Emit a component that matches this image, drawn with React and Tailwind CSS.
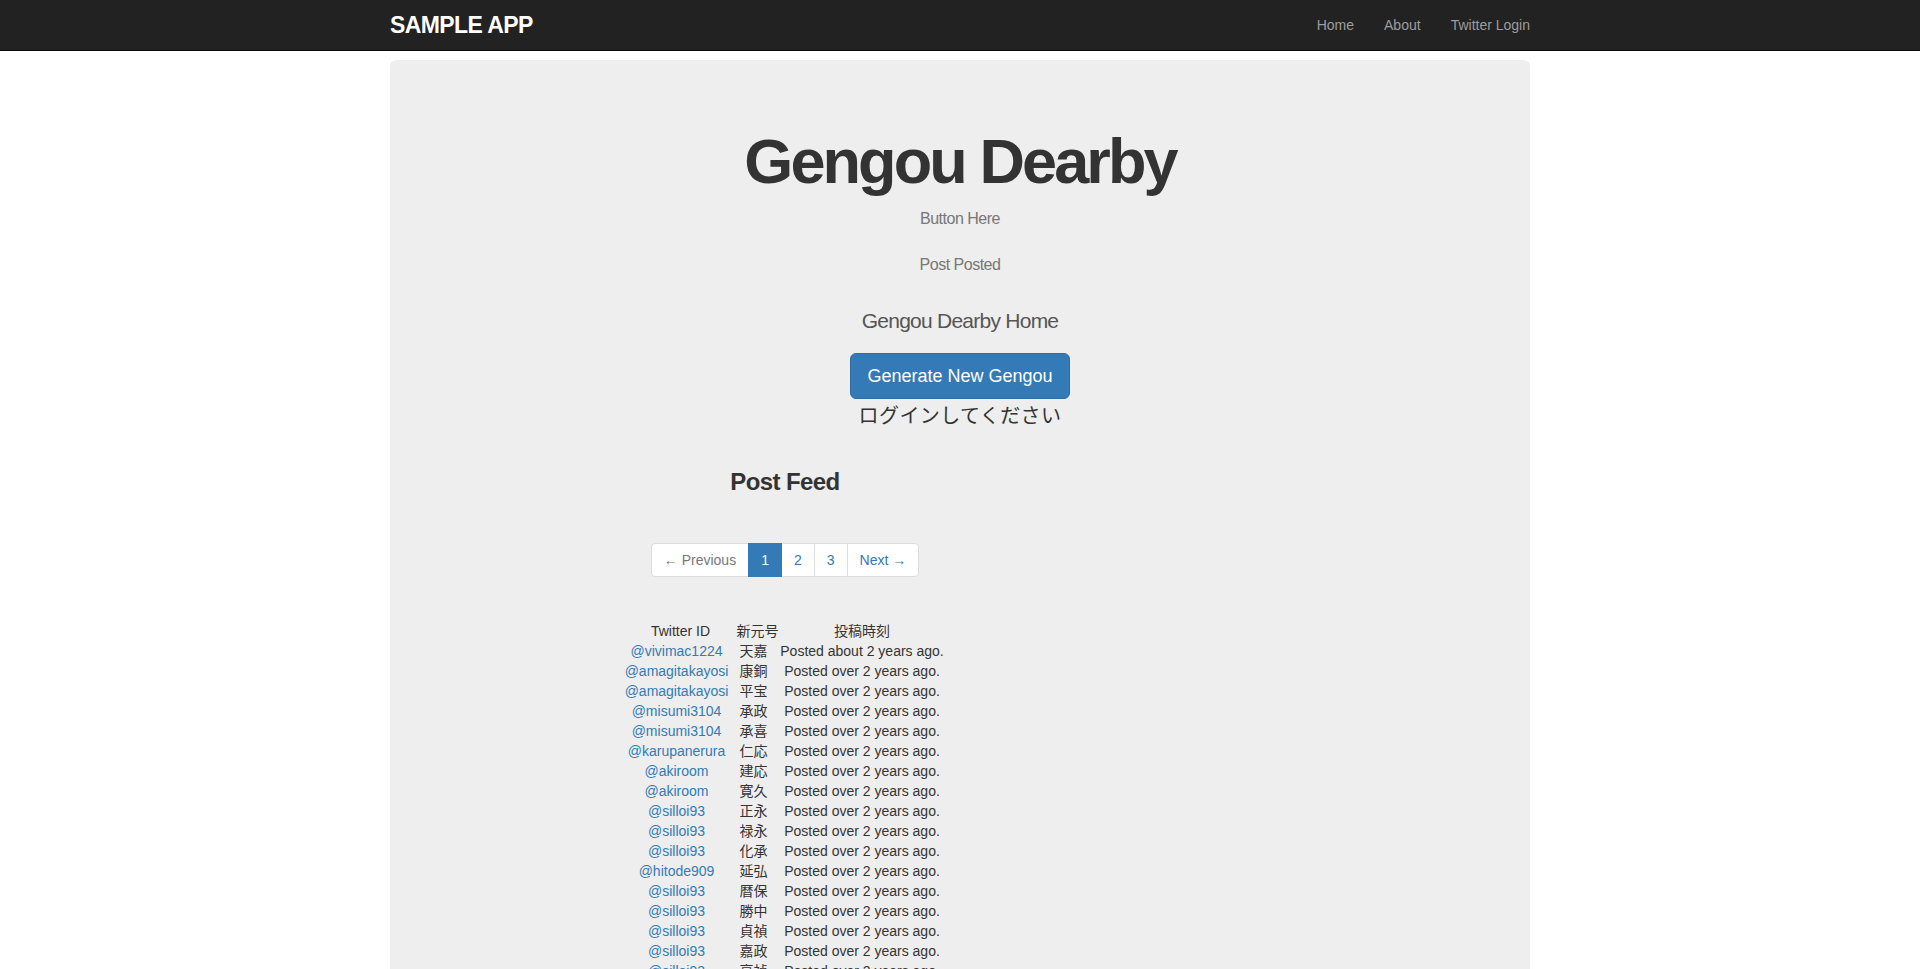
import React from "react";

const rows = [
  ["@vivimac1224", "天嘉", "Posted about 2 years ago."],
  ["@amagitakayosi", "康銅", "Posted over 2 years ago."],
  ["@amagitakayosi", "平宝", "Posted over 2 years ago."],
  ["@misumi3104", "承政", "Posted over 2 years ago."],
  ["@misumi3104", "承喜", "Posted over 2 years ago."],
  ["@karupanerura", "仁応", "Posted over 2 years ago."],
  ["@akiroom", "建応", "Posted over 2 years ago."],
  ["@akiroom", "寛久", "Posted over 2 years ago."],
  ["@silloi93", "正永", "Posted over 2 years ago."],
  ["@silloi93", "禄永", "Posted over 2 years ago."],
  ["@silloi93", "化承", "Posted over 2 years ago."],
  ["@hitode909", "延弘", "Posted over 2 years ago."],
  ["@silloi93", "暦保", "Posted over 2 years ago."],
  ["@silloi93", "勝中", "Posted over 2 years ago."],
  ["@silloi93", "貞禎", "Posted over 2 years ago."],
  ["@silloi93", "嘉政", "Posted over 2 years ago."],
  ["@silloi93", "享禎", "Posted over 2 years ago."],
  ["@silloi93", "文長", "Posted over 2 years ago."],
  ["@silloi93", "安徳", "Posted over 2 years ago."],
];

export default function App() {
  return (
    <div className="min-h-[969px] bg-white font-['Liberation_Sans','Noto_Sans_CJK_JP',sans-serif] text-[14px] text-[#333]">
      <nav className="h-[51px] bg-[#222] border-b border-[#080808]">
        <div className="w-[1170px] mx-auto px-[15px] h-[50px] flex items-center justify-between">
          <a className="text-white font-bold text-[23px] tracking-[-0.6px] leading-[50px]">SAMPLE APP</a>
          <ul className="flex -mr-[15px]">
            <li className="px-[15px] leading-[50px] text-[#9d9d9d]">Home</li>
            <li className="px-[15px] leading-[50px] text-[#9d9d9d]">About</li>
            <li className="px-[15px] leading-[50px] text-[#9d9d9d]">Twitter Login</li>
          </ul>
        </div>
      </nav>
      <div className="w-[1170px] mx-auto px-[15px] pt-[9px]">
        <div className="bg-[#eee] rounded-[6px] px-[60px] pt-[66px] pb-[60px]">
          <div className="flex flex-col items-center">
            <h1 className="text-[63px] leading-[70px] font-bold tracking-[-2.9px] text-[#333]">Gengou Dearby</h1>
            <div className="mt-[13px] leading-[20px] text-[16px] tracking-[-0.5px] text-[#777]">Button Here</div>
            <div className="mt-[26px] leading-[20px] text-[16px] tracking-[-0.5px] text-[#777]">Post Posted</div>
            <p className="mt-[31px] leading-[30px] text-[21px] font-light tracking-[-0.75px] text-[#555]">Gengou Dearby Home</p>
            <button className="mt-[17px] h-[46px] px-[16px] bg-[#337ab7] border border-[#2e6da4] rounded-[6px] text-white text-[18px] leading-[24px]">Generate New Gengou</button>
            <div className="mt-[2px] leading-[28px] text-[20px] tracking-[0.4px] font-['Noto_Sans_CJK_JP',sans-serif] text-[#333]">ログインしてください</div>
          </div>
          <div className="w-[670px] flex flex-col items-center">
            <h3 className="mt-[40px] text-[24px] leading-[26px] font-bold tracking-[-0.6px] text-[#333]">Post Feed</h3>
            <div className="mt-[48px] flex h-[34px] text-[14px] leading-[20px]">
              <span className="px-[12px] py-[6px] bg-white border border-[#ddd] rounded-l-[4px] text-[#777]">← Previous</span>
              <span className="-ml-px px-[12px] py-[6px] bg-[#337ab7] border border-[#337ab7] text-white z-10">1</span>
              <span className="-ml-px px-[12px] py-[6px] bg-white border border-[#ddd] text-[#337ab7]">2</span>
              <span className="-ml-px px-[12px] py-[6px] bg-white border border-[#ddd] text-[#337ab7]">3</span>
              <span className="-ml-px px-[12px] py-[6px] bg-white border border-[#ddd] rounded-r-[4px] text-[#337ab7]">Next →</span>
            </div>
            <table className="mt-[44px] border-collapse text-[14px] leading-[20px]">
              <thead>
                <tr>
                  <th className="w-[104px] p-0 pl-[8px] font-normal text-center">Twitter ID</th>
                  <th className="w-[48px] p-0 pl-[8px] font-normal text-center whitespace-nowrap">新元号</th>
                  <th className="w-[167px] p-0 font-normal text-center">投稿時刻</th>
                </tr>
              </thead>
              <tbody>
                {rows.map((r, i) => (
                  <tr key={i}>
                    <td className="p-0 text-center text-[#337ab7] whitespace-nowrap">{r[0]}</td>
                    <td className="p-0 text-center whitespace-nowrap">{r[1]}</td>
                    <td className="p-0 text-center whitespace-nowrap">{r[2]}</td>
                  </tr>
                ))}
              </tbody>
            </table>
          </div>
        </div>
      </div>
    </div>
  );
}
